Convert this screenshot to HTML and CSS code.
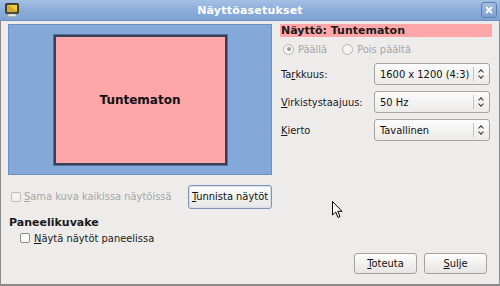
FILE: index.html
```html
<!DOCTYPE html>
<html lang="fi">
<head>
    <meta charset="UTF-8">
    <title>Näyttöasetukset</title>
    <link rel="stylesheet" href="styles.css">
</head>
<body>
    <div class="window">
        <div class="titlebar">
            <svg class="app-icon" width="14" height="14" viewBox="0 0 14 14">
                <rect x="0.5" y="0.5" width="13" height="10" rx="1" fill="#4a4a3a" stroke="#3a3a2a"/>
                <path d="M2 2 L12 2 L12 9 Z" fill="#f0c93a"/>
                <path d="M2 2 L12 9 L2 9 Z" fill="#d9a92a"/>
                <rect x="3" y="11" width="8" height="2.5" fill="#e8e8e0" stroke="#9a9a90" stroke-width="0.5"/>
            </svg>
            <span class="title">Näyttöasetukset</span>
            <div class="close-btn">
                <svg width="8" height="8" viewBox="0 0 8 8">
                    <path d="M1 1 L7 7 M7 1 L1 7" stroke="#fff" stroke-width="1.8"/>
                </svg>
            </div>
        </div>

        <div class="content">
            <div class="top">
                <div class="preview">
                    <div class="monitor">Tuntematon</div>
                </div>

                <div class="settings">
                    <div class="monitor-name">Näyttö: Tuntematon</div>
                    <div class="radios">
                        <span class="radio checked"></span><span class="radio-label">Päällä</span>
                        <span class="radio"></span><span class="radio-label">Pois päältä</span>
                    </div>
                    <div class="field">
                        <span class="field-label">Ta<u>r</u>kkuus:</span>
                        <div class="combo"><span class="combo-text">1600 x 1200 (4:3)</span><span class="combo-arrow"></span></div>
                    </div>
                    <div class="field">
                        <span class="field-label"><u>V</u>irkistystaajuus:</span>
                        <div class="combo"><span class="combo-text">50 Hz</span><span class="combo-arrow"></span></div>
                    </div>
                    <div class="field">
                        <span class="field-label"><u>K</u>ierto</span>
                        <div class="combo"><span class="combo-text">Tavallinen</span><span class="combo-arrow"></span></div>
                    </div>
                </div>
            </div>

            <div class="mirror-row">
                <span class="checkbox disabled"></span>
                <span class="mirror-label"><u>S</u>ama kuva kaikissa näytöissä</span>
                <button class="button focused"><u>T</u>unnista näytöt</button>
            </div>

            <div class="panel-title">Paneelikuvake</div>
            <div class="panel-row">
                <span class="checkbox"></span>
                <span><u>N</u>äytä näytöt paneelissa</span>
            </div>

            <div class="actions">
                <button class="button action"><u>T</u>oteuta</button>
                <button class="button action"><u>S</u>ulje</button>
            </div>
        </div>

        <svg class="cursor" width="12" height="18" viewBox="0 0 12 18">
            <path d="M0.5 0.5 L0.5 14 L3.7 11 L6 16.5 L8 15.6 L5.8 10.3 L10 10.3 Z" fill="#fff" stroke="#000" stroke-width="1"/>
        </svg>
    </div>
</body>
</html>
```

FILE: styles.css
```css
body {
    margin: 0;
    font-family: 'DejaVu Sans Condensed', 'DejaVu Sans', sans-serif;
    font-stretch: condensed;
    font-size: 11px;
    color: #1a1a1a;
    background: #edeceb;
}

u {
    text-decoration: underline;
    text-underline-offset: 1px;
}

.window {
    position: relative;
    width: 500px;
    height: 286px;
    box-sizing: border-box;
    background: #edeceb;
    border-left: 1px solid #8a8a8a;
    border-right: 1px solid #8a8a8a;
    border-bottom: 2px solid #8a8a8a;
}

.titlebar {
    height: 21px;
    margin: 0 -1px;
    background: linear-gradient(to bottom, #a6c0e4 0%, #8cadd9 50%, #7fa3d3 100%);
    border-bottom: 1px solid #6f8fbc;
    box-sizing: border-box;
    display: flex;
    align-items: center;
    position: relative;
}

.app-icon {
    margin-left: 5px;
}

.title {
    position: absolute;
    left: 0;
    right: 0;
    text-align: center;
    color: #fff;
    font-family: 'DejaVu Sans', sans-serif;
    font-stretch: normal;
    font-weight: bold;
    font-size: 11px;
    letter-spacing: 0.2px;
}

.close-btn {
    margin-left: auto;
    margin-right: 3px;
    width: 14px;
    height: 14px;
    border: 1px solid #5f7fae;
    border-radius: 3px;
    background: linear-gradient(to bottom, #a4bde2, #7e9fd0);
    display: flex;
    align-items: center;
    justify-content: center;
    position: relative;
    z-index: 1;
}

.content {
    padding: 3px 0 0 7px;
}

.top {
    display: flex;
}

.preview {
    width: 264px;
    height: 151px;
    box-sizing: border-box;
    background: #84a8d8;
    border: 1px solid #6c90c2;
    display: flex;
    align-items: center;
    justify-content: center;
}

.monitor {
    width: 173px;
    height: 130px;
    box-sizing: border-box;
    background: #ffa6a8;
    border: 2px solid #34405a;
    outline: 1px solid #5d6f92;
    display: flex;
    align-items: center;
    justify-content: center;
    font-family: 'DejaVu Sans', sans-serif;
    font-stretch: normal;
    font-weight: bold;
    font-size: 12px;
    color: #111;
}

.settings {
    margin-left: 8px;
    width: 212px;
}

.monitor-name {
    background: #ffa6a8;
    font-family: 'DejaVu Sans', sans-serif;
    font-stretch: normal;
    font-weight: bold;
    height: 13px;
    line-height: 13px;
    padding-left: 1px;
}

.radios {
    display: flex;
    align-items: center;
    height: 20px;
    margin-top: 2px;
    color: #a6a6a4;
}

.radio {
    width: 9px;
    height: 9px;
    border: 1px solid #b4b4b2;
    border-radius: 50%;
    background: #f4f4f3;
    margin-left: 3px;
    margin-right: 4px;
    position: relative;
}

.radio + .radio-label + .radio {
    margin-left: 15px;
}

.radio.checked::after {
    content: '';
    position: absolute;
    left: 2.5px;
    top: 2.5px;
    width: 4px;
    height: 4px;
    border-radius: 50%;
    background: #9a9a98;
}

.field {
    display: flex;
    align-items: center;
    height: 22px;
    margin-top: 6px;
}

.radios + .field {
    margin-top: 4px;
}

.field-label {
    width: 93px;
    padding-left: 1px;
    white-space: nowrap;
}

.combo {
    width: 116px;
    height: 22px;
    box-sizing: border-box;
    border: 1px solid #a5a5a3;
    border-radius: 3px;
    background: linear-gradient(to bottom, #fbfbfb, #ecebea);
    display: flex;
    align-items: center;
}

.combo-text {
    flex: 1;
    padding-left: 5px;
    color: #111;
    white-space: nowrap;
}

.combo-arrow {
    width: 15px;
    height: 14px;
    border-left: 1px solid #c4c4c2;
    position: relative;
}

.combo-arrow::before,
.combo-arrow::after {
    content: '';
    position: absolute;
    left: 5px;
    width: 3px;
    height: 3px;
    border-left: 1px solid #333;
    border-top: 1px solid #333;
}

.combo-arrow::before {
    top: 3px;
    transform: rotate(45deg);
}

.combo-arrow::after {
    top: 7px;
    transform: rotate(225deg);
}

.mirror-row {
    display: flex;
    align-items: center;
    margin-top: 9px;
    height: 25px;
}

.checkbox {
    width: 8px;
    height: 8px;
    border: 1px solid #8d8d8b;
    border-radius: 2px;
    background: #fafafa;
    margin-right: 4px;
}

.checkbox.disabled {
    border-color: #bdbdbb;
    background: #f2f2f1;
    margin-left: 3px;
    margin-right: 3px;
}

.mirror-label {
    color: #a6a6a4;
    width: 164px;
    white-space: nowrap;
}

.button {
    font-family: inherit;
    font-stretch: condensed;
    font-size: 11px;
    color: #111;
    border: 1px solid #a3a3a1;
    border-radius: 3px;
    background: linear-gradient(to bottom, #fdfdfd, #e6e5e3);
    padding: 0;
    height: 21px;
    margin: 0;
    white-space: nowrap;
}

.button.focused {
    width: 84px;
    height: 24px;
    border-color: #7d93b6;
    box-shadow: inset 0 0 0 1px #d6e0ee;
}

.panel-title {
    font-family: 'DejaVu Sans', sans-serif;
    font-stretch: normal;
    font-weight: bold;
    margin-top: 6px;
    height: 15px;
    line-height: 15px;
    padding-left: 1px;
}

.panel-row {
    display: flex;
    align-items: center;
    height: 16px;
    padding-left: 12px;
}

.actions {
    display: flex;
    justify-content: flex-end;
    gap: 7px;
    margin-top: 7px;
    margin-right: 12px;
}

.button.action {
    width: 63px;
}

.cursor {
    position: absolute;
    left: 331px;
    top: 201px;
}
```
